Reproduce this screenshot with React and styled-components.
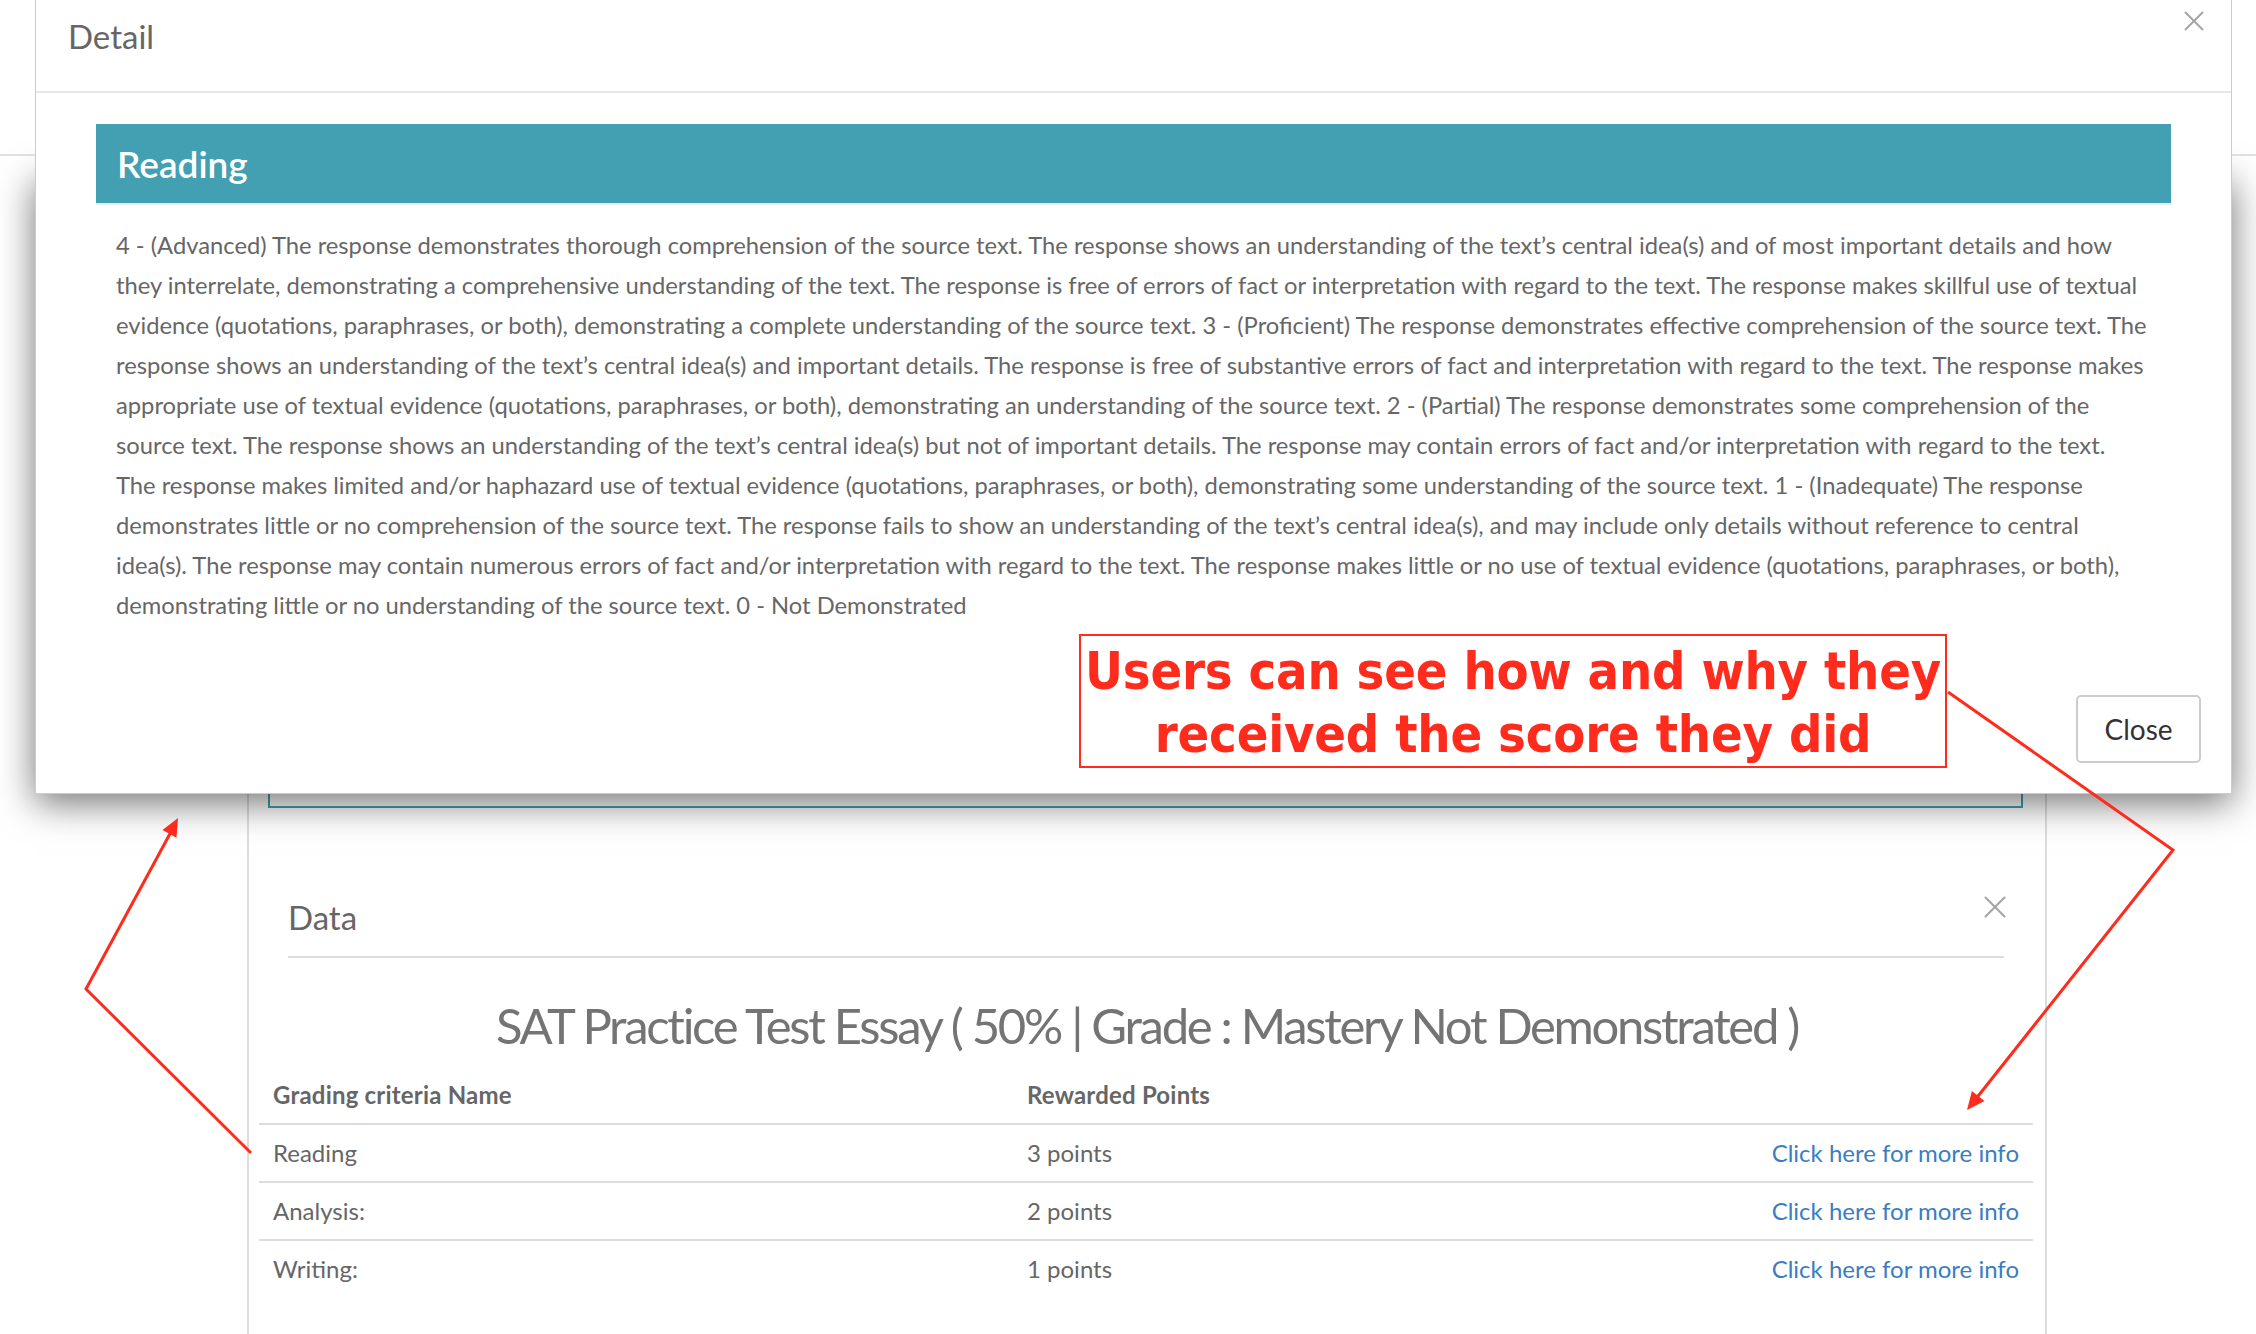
import React from "react";
import styled, { createGlobalStyle } from "styled-components";
import { X } from "lucide-react";

const GlobalStyle = createGlobalStyle`
  html, body { margin: 0; padding: 0; background: #fff; }
  body { font-family: Lato, "Liberation Sans", sans-serif; }
  #root { width: 2256px; height: 1334px; }
  * { box-sizing: border-box; }
`;

const Page = styled.div`
  position: relative;
  width: 2256px;
  height: 1334px;
  overflow: hidden;
  background: #fff;
  font-family: Lato, "Liberation Sans", sans-serif;
`;

const TopBar = styled.div`
  height: 156px;
  border-bottom: 2px solid #e2e2e2;
`;

const ContentPanel = styled.div`
  margin-left: 247px;
  width: 1800px;
  height: 1178px;
  border-left: 2px solid #dddddd;
  border-right: 2px solid #dddddd;
  padding-top: 44px;
`;

const AccentBox = styled.div`
  margin: 0 22px 0 19px;
  height: 608px;
  border: 2px solid #439fb2;
`;

const DataHeader = styled.div`
  margin: 0 41px 0 39px;
  padding-top: 89px;
  padding-bottom: 19px;
  border-bottom: 2px solid #dddddd;
  display: flex;
  justify-content: space-between;
  align-items: flex-start;
`;

const SectionTitle = styled.h4`
  margin: 0;
  font-size: 33px;
  line-height: 40px;
  font-weight: 400;
  color: #666;
`;

const CloseIcon = styled.span`
  display: flex;
  color: #a5a5a5;
  margin-top: ${(p) => p.$top}px;
  margin-right: ${(p) => p.$right}px;
`;

const ScoreTitle = styled.h2`
  margin: 38px 0 0;
  text-align: center;
  font-size: 49px;
  line-height: 58px;
  font-weight: 400;
  color: #747474;
  letter-spacing: -2.3px;
`;

const Table = styled.table`
  margin: 13px 12px 0 10px;
  width: calc(100% - 22px);
  border-collapse: collapse;
  font-size: 24px;
  color: #666;
`;

const Th = styled.th`
  padding: 10px 14px;
  line-height: 36px;
  text-align: left;
  font-weight: 700;
  border-bottom: 2px solid #dddddd;
  width: ${(p) => p.$w || "auto"};
  letter-spacing: 0.2px;
`;

const Td = styled.td`
  padding: 10px 14px;
  line-height: 36px;
  text-align: ${(p) => (p.$right ? "right" : "left")};
  border-bottom: ${(p) => (p.$last ? "none" : "2px solid #dddddd")};
`;

const InfoLink = styled.a`
  color: #3a7dc2;
  text-decoration: none;
`;

const ModalShadow = styled.div`
  position: absolute;
  top: 172px;
  left: 35px;
  width: 2197px;
  height: 621px;
  box-shadow: 0 10px 35px rgba(0, 0, 0, 0.55);
  z-index: 9;
`;

const Modal = styled.div`
  position: absolute;
  top: 0;
  left: 35px;
  width: 2197px;
  background: #fff;
  border: 1px solid rgba(0, 0, 0, 0.2);
  border-top: none;
  z-index: 10;
`;

const ModalHeader = styled.div`
  display: flex;
  justify-content: space-between;
  align-items: flex-start;
  padding: 16px 20px 35px 32px;
  border-bottom: 2px solid #e8e8e8;
`;

const ModalBody = styled.div`
  padding: 31px 60px 0;
`;

const Banner = styled.div`
  height: 81px;
  padding-left: 21px;
  background: #439fb2;
  border-bottom: 2px solid #e6eded;
  color: #fff;
  font-size: 37px;
  line-height: 79px;
  font-weight: 600;
`;

const RubricText = styled.p`
  margin: 0;
  padding: 20px 22px 0 20px;
  font-size: 23.75px;
  line-height: 40px;
  color: #666;
`;

const ModalFooter = styled.div`
  display: flex;
  justify-content: flex-end;
  padding: 70px 30px 30px;
`;

const Button = styled.button`
  width: 125px;
  height: 68px;
  background: #fff;
  border: 2px solid #cccccc;
  border-radius: 5px;
  font-family: Lato, "Liberation Sans", sans-serif;
  font-size: 28px;
  color: #333;
  padding: 0;
`;

const Callout = styled.div`
  position: absolute;
  left: 1079px;
  top: 634px;
  width: 868px;
  height: 134px;
  border: 2px solid #ff2b1c;
  background: #fff;
  padding-top: 4px;
  text-align: center;
  white-space: nowrap;
  font-family: "DejaVu Sans Condensed", "DejaVu Sans", sans-serif;
  font-stretch: condensed;
  font-weight: 700;
  font-size: 52px;
  line-height: 63px;
  letter-spacing: -0.2px;
  color: #ff2b1c;
  z-index: 20;
`;

const Arrows = styled.svg`
  position: absolute;
  left: 0;
  top: 0;
  width: 2256px;
  height: 1334px;
  pointer-events: none;
  z-index: 21;
`;

const rubric =
  "4 - (Advanced) The response demonstrates thorough comprehension of the source text. The response shows an understanding of the text\u2019s central idea(s) and of most important details and how they interrelate, demonstrating a comprehensive understanding of the text. The response is free of errors of fact or interpretation with regard to the text. The response makes skillful use of textual evidence (quotations, paraphrases, or both), demonstrating a complete understanding of the source text. 3 - (Proficient) The response demonstrates effective comprehension of the source text. The response shows an understanding of the text\u2019s central idea(s) and important details. The response is free of substantive errors of fact and interpretation with regard to the text. The response makes appropriate use of textual evidence (quotations, paraphrases, or both), demonstrating an understanding of the source text. 2 - (Partial) The response demonstrates some comprehension of the source text. The response shows an understanding of the text\u2019s central idea(s) but not of important details. The response may contain errors of fact and/or interpretation with regard to the text. The response makes limited and/or haphazard use of textual evidence (quotations, paraphrases, or both), demonstrating some understanding of the source text. 1 - (Inadequate) The response demonstrates little or no comprehension of the source text. The response fails to show an understanding of the text\u2019s central idea(s), and may include only details without reference to central idea(s). The response may contain numerous errors of fact and/or interpretation with regard to the text. The response makes little or no use of textual evidence (quotations, paraphrases, or both), demonstrating little or no understanding of the source text. 0 - Not Demonstrated";

const rows = [
  { name: "Reading", points: "3 points" },
  { name: "Analysis:", points: "2 points" },
  { name: "Writing:", points: "1 points" },
];

export default function App() {
  return (
    <Page>
      <GlobalStyle />
      <TopBar />
      <ContentPanel>
        <AccentBox />
        <DataHeader>
          <SectionTitle>Data</SectionTitle>
          <CloseIcon $top={-9} $right={-10}>
            <X size={38} strokeWidth={1.3} />
          </CloseIcon>
        </DataHeader>
        <ScoreTitle>SAT Practice Test Essay ( 50% | Grade : Mastery Not Demonstrated )</ScoreTitle>
        <Table>
          <thead>
            <tr>
              <Th $w="754px">Grading criteria Name</Th>
              <Th>Rewarded Points</Th>
              <Th />
            </tr>
          </thead>
          <tbody>
            {rows.map((r, i) => (
              <tr key={r.name}>
                <Td $last={i === rows.length - 1}>{r.name}</Td>
                <Td $last={i === rows.length - 1}>{r.points}</Td>
                <Td $last={i === rows.length - 1} $right>
                  <InfoLink href="#">Click here for more info</InfoLink>
                </Td>
              </tr>
            ))}
          </tbody>
        </Table>
      </ContentPanel>

      <ModalShadow />
      <Modal>
        <ModalHeader>
          <SectionTitle>Detail</SectionTitle>
          <CloseIcon $top={-12} $right={0}>
            <X size={34} strokeWidth={1.4} />
          </CloseIcon>
        </ModalHeader>
        <ModalBody>
          <Banner>Reading</Banner>
          <RubricText>{rubric}</RubricText>
        </ModalBody>
        <ModalFooter>
          <Button>Close</Button>
        </ModalFooter>
      </Modal>

      <Callout>
        Users can see how and why they
        <br />
        received the score they did
      </Callout>

      <Arrows viewBox="0 0 2256 1334">
        <polyline
          points="251,1153 86,989 172,830"
          fill="none"
          stroke="#ff2b1c"
          strokeWidth="3"
          strokeLinejoin="miter"
        />
        <polygon points="178,818 176.5,837.7 162.5,830.1" fill="#ff2b1c" />
        <polyline
          points="1948,692 2173,850 1975,1100"
          fill="none"
          stroke="#ff2b1c"
          strokeWidth="3"
          strokeLinejoin="miter"
        />
        <polygon points="1967,1110 1984.5,1100.9 1971.9,1090.9" fill="#ff2b1c" />
      </Arrows>
    </Page>
  );
}
